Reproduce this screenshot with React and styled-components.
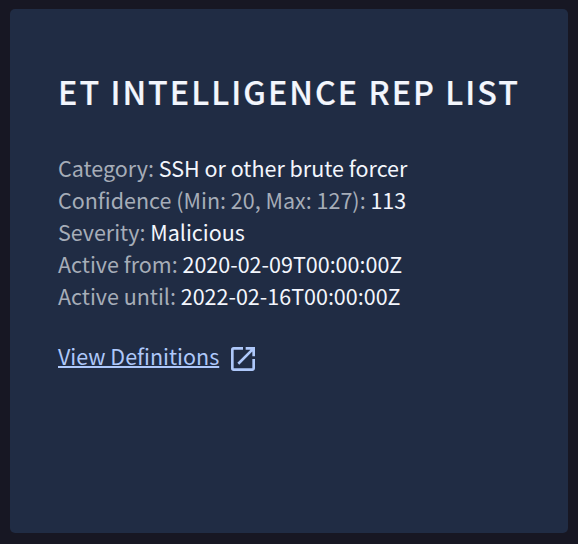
import React from 'react'
import styled, { createGlobalStyle } from 'styled-components'
import { MdOpenInNew } from 'react-icons/md'

const GlobalStyle = createGlobalStyle`
  * {
    box-sizing: border-box;
  }

  body {
    margin: 0;
    background-color: #171723;
    font-family: "Noto Sans CJK SC", "Open Sans", sans-serif;
  }
`;

const Page = styled.main`
  height: 100vh;
  padding: 9px 10px 11px;
`;

const Card = styled.section`
  height: 100%;
  padding: 62px 48px 48px;
  border-radius: 5px;
  background-color: #202c44;
`;

const Title = styled.h1`
  margin: 0;
  color: #f3f6fd;
  font-size: 32.25px;
  font-weight: 500;
  line-height: 40px;
  letter-spacing: 2.03px;
  white-space: nowrap;
  -webkit-text-stroke: 0.2px #f3f6fd;
`;

const Details = styled.div`
  margin-top: 41px;
`;

const Row = styled.p`
  margin: 0;
  color: #a6adb8;
  font-size: 21.5px;
  line-height: 32px;
  white-space: nowrap;
`;

const Value = styled.span`
  color: #f3f6fd;
`;

const Link = styled.a`
  display: inline-flex;
  align-items: flex-start;
  margin-top: 28px;
  color: #aec8fa;
  font-size: 21.5px;
  line-height: 32px;
  text-decoration: none;
  cursor: pointer;

  svg {
    width: 32px;
    height: 32px;
    margin: 3px 0 0 8px;
  }
`;

const LinkText = styled.span`
  text-decoration: underline;
  text-decoration-thickness: 2px;
  text-underline-offset: 1px;
  text-decoration-skip-ink: none;
`;

const details = [
  { label: 'Category', value: 'SSH or other brute forcer' },
  { label: 'Confidence (Min: 20, Max: 127)', value: '113' },
  { label: 'Severity', value: 'Malicious' },
  { label: 'Active from', value: '2020-02-09T00:00:00Z' },
  { label: 'Active until', value: '2022-02-16T00:00:00Z' },
];

const App = () => {
  return (
    <Page>
      <GlobalStyle />
      <Card>
        <Title>ET INTELLIGENCE REP LIST</Title>
        <Details>
          {details.map((item) => (
            <Row key={item.label}>
              {item.label}: <Value>{item.value}</Value>
            </Row>
          ))}
        </Details>
        <Link>
          <LinkText>View Definitions</LinkText>
          <MdOpenInNew />
        </Link>
      </Card>
    </Page>
  );
}

export default App
